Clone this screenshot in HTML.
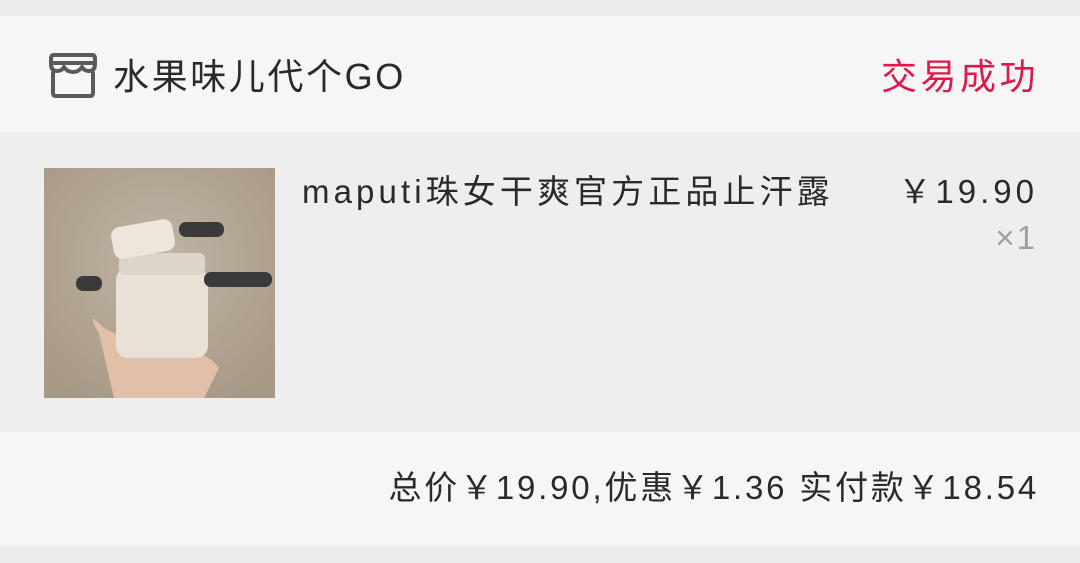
<!DOCTYPE html>
<html><head><meta charset="utf-8"><style>
body{margin:0;width:1080px;height:563px;background:#ebebeb;font-family:"Liberation Sans","Noto Sans CJK SC",sans-serif;position:relative;overflow:hidden}
.abs{position:absolute;white-space:nowrap}
</style></head><body>
<div class="abs" style="left:0;top:16px;width:1080px;height:116px;background:#f6f6f6"></div>
<div class="abs" style="left:0;top:132px;width:1080px;height:300px;background:#eeeeee"></div>
<div class="abs" style="left:0;top:432px;width:1080px;height:114px;background:#f6f6f6"></div>
<svg class="abs" style="left:47px;top:51px" width="52" height="48" viewBox="0 0 52 48" fill="none" stroke="#5a5a5a" stroke-width="4" stroke-linejoin="round" stroke-linecap="round">
<path d="M7 4 H45 Q48 4 48 8 V13 Q48 20 42 20 Q37 20 35 16 Q32 21 26 21 Q20 21 17 16 Q15 20 10 20 Q4 20 4 13 V8 Q4 4 7 4 Z"/>
<path d="M6 12 H46"/>
<path d="M6 22 V42 Q6 45 9 45 H43 Q46 45 46 42 V22"/>
</svg>
<div class="abs" style="left:113px;top:54px;font-size:36px;letter-spacing:2.6px;color:#2a2a2a;line-height:46px">水果味儿代个GO</div>
<div class="abs" style="right:41px;top:54px;font-size:36px;letter-spacing:3.5px;color:#e0174a;line-height:46px">交易成功</div>
<svg class="abs" style="left:44px;top:168px" width="231" height="230" viewBox="0 0 231 230">
<defs><radialGradient id="g" cx="0.5" cy="0.4" r="0.7"><stop offset="0" stop-color="#c0b4a4"/><stop offset="1" stop-color="#a89886"/></radialGradient></defs>
<rect width="231" height="230" fill="url(#g)"/>
<path d="M60 160 Q40 140 55 165 L70 230 H160 L175 200 Q160 180 140 190 L80 170Z" fill="#e2bfa8"/>
<rect x="72" y="100" width="92" height="90" rx="12" fill="#e8e1d6"/>
<rect x="75" y="85" width="86" height="22" rx="6" fill="#ddd5c9"/>
<rect x="68" y="55" width="62" height="32" rx="9" fill="#ece6dc" transform="rotate(-10 99 71)"/>
<rect x="135" y="54" width="45" height="15" rx="7" fill="#3a3a3a"/>
<rect x="32" y="108" width="26" height="15" rx="7" fill="#3a3a3a"/>
<rect x="160" y="104" width="68" height="15" rx="7" fill="#3a3a3a"/>
</svg>
<div class="abs" style="left:302px;top:170px;font-size:33px;letter-spacing:4.1px;color:#2a2a2a;line-height:44px">maputi珠女干爽官方正品止汗露</div>
<div class="abs" style="right:42px;top:170px;font-size:33px;letter-spacing:4px;color:#2a2a2a;line-height:44px">￥19.90</div>
<div class="abs" style="right:43px;top:216px;font-size:33px;letter-spacing:2px;color:#a0a0a0;line-height:44px">×1</div>
<div class="abs" style="right:41px;top:466px;font-size:33px;letter-spacing:2.8px;color:#2a2a2a;line-height:44px">总价￥19.90,优惠￥1.36 实付款￥18.54</div>
</body></html>
